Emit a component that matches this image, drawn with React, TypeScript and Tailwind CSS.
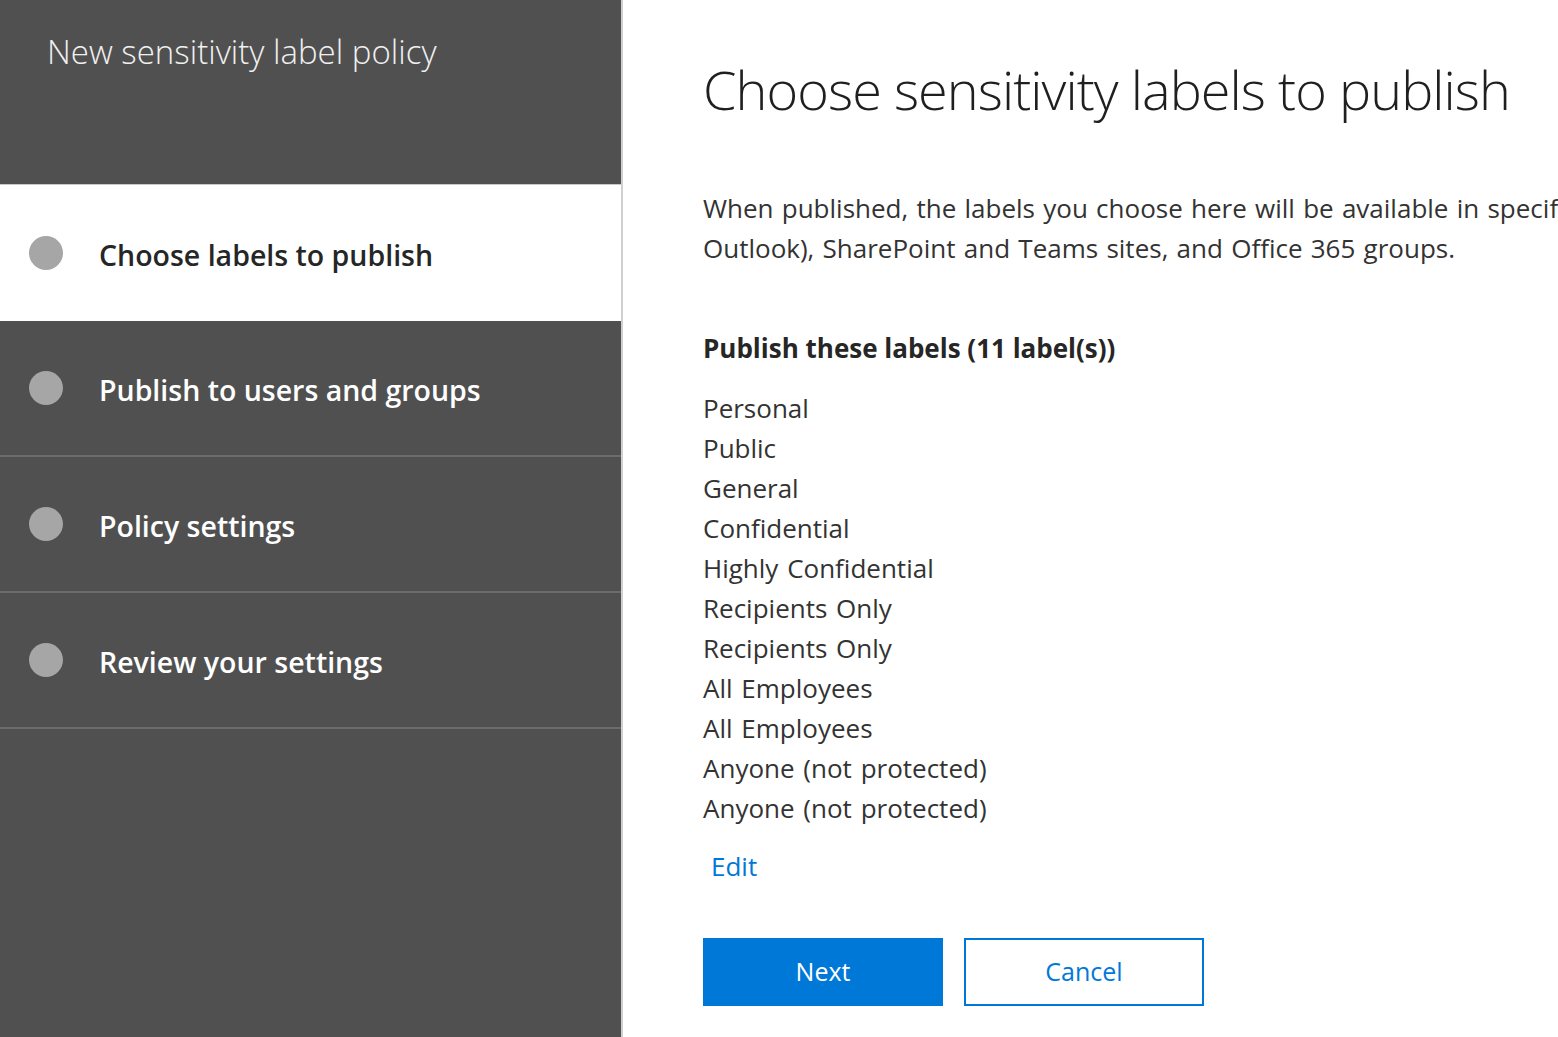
import React from "react";

const font = { fontFamily: '"Open Sans", "Noto Sans", sans-serif' };

function Step({ label, active }: { label: string; active?: boolean }) {
  return (
    <div
      className={
        "h-[136px] flex items-center pl-[29px] " +
        (active ? "bg-white" : "bg-[#505050] border-b-2 border-[#6b6b6b]")
      }
    >
      <div className="w-[34px] h-[34px] rounded-full bg-[#a6a6a6] shrink-0" />
      <div
        className={
          "ml-[36px] pt-[5px] text-[28.5px] font-semibold " +
          (active ? "text-[#262626]" : "text-white")
        }
      >
        {label}
      </div>
    </div>
  );
}

export default function App() {
  const labels = [
    "Personal",
    "Public",
    "General",
    "Confidential",
    "Highly Confidential",
    "Recipients Only",
    "Recipients Only",
    "All Employees",
    "All Employees",
    "Anyone (not protected)",
    "Anyone (not protected)",
  ];
  return (
    <div className="w-[1558px] h-[1037px] overflow-hidden flex bg-white" style={font}>
      <div className="w-[623px] shrink-0 flex flex-col bg-[#505050] border-r-2 border-[#d0d0d0]">
        <div className="h-[185px] bg-[#505050] pl-[47px] pt-[30px] border-b border-[#c8c8c8]">
          <div className="text-[33px] font-light text-[#f0f0f0] leading-[44px]">
            New sensitivity label policy
          </div>
        </div>
        <Step label="Choose labels to publish" active />
        <Step label="Publish to users and groups" />
        <Step label="Policy settings" />
        <Step label="Review your settings" />
        <div className="flex-1 bg-[#505050]" />
      </div>
      <div className="flex-1 min-w-0 pl-[80px] pt-[55px] text-[#333333] whitespace-nowrap overflow-hidden">
        <div className="text-[54px] font-light text-[#1f1f1f] leading-[68px] tracking-[-0.95px]">
          Choose sensitivity labels to publish
        </div>
        <div className="mt-[65px] text-[26px] leading-[40px] [word-spacing:1.5px] text-[#333333]">
          <div className="overflow-hidden">When published, the labels you choose here will be available in specific apps (such as Word, Excel and</div>
          <div>Outlook), SharePoint and Teams sites, and Office 365 groups.</div>
        </div>
        <div className="mt-[60px] text-[26px] leading-[40px] font-bold text-[#262626]">
          Publish these labels (11 label(s))
        </div>
        <div className="mt-[20px] text-[26px] leading-[40px] [word-spacing:2px] text-[#333333]">
          {labels.map((l, i) => (
            <div key={i}>{l}</div>
          ))}
        </div>
        <div className="mt-[18px] pl-[8px] text-[26px] leading-[40px] text-[#0078d7]">Edit</div>
        <div className="mt-[52px] flex gap-[21px]">
          <button className="w-[240px] h-[68px] bg-[#0078d7] text-white text-[25px]">Next</button>
          <button className="w-[240px] h-[68px] bg-white border-2 border-[#0078d7] text-[#0078d7] text-[25px]">
            Cancel
          </button>
        </div>
      </div>
    </div>
  );
}
